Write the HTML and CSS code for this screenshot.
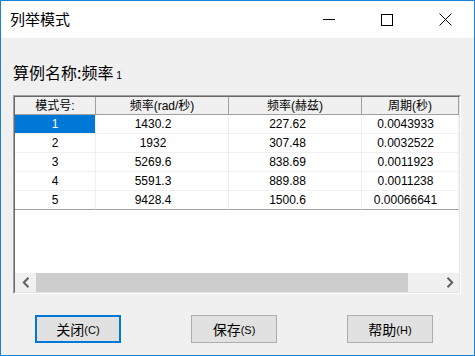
FILE: index.html
```html
<!DOCTYPE html>
<html lang="zh-CN">
<head>
<meta charset="utf-8">
<title>列举模式</title>
<link rel="stylesheet" href="styles.css">
</head>
<body>
<div class="window">
  <div class="titlebar">
    <div class="title">列举模式</div>
    <div class="controls">
      <div class="ctl"><svg width="12" height="12" viewBox="0 0 12 12"><path d="M0 5.5H12" stroke="#000" stroke-width="1"/></svg></div>
      <div class="ctl"><svg width="12" height="12" viewBox="0 0 12 12"><rect x="0.5" y="0.5" width="11" height="11" fill="none" stroke="#000" stroke-width="1"/></svg></div>
      <div class="ctl"><svg width="13" height="13" viewBox="0 0 13 13"><path d="M0.5 0.5L12.5 12.5M12.5 0.5L0.5 12.5" stroke="#000" stroke-width="1"/></svg></div>
    </div>
  </div>
  <div class="content">
    <div class="case-name">算例名称:频率<span class="num"> 1</span></div>
    <div class="listbox">
      <div class="list-inner">
        <div class="grid">
          <div class="hcell">模式号:</div>
          <div class="hcell">频率(rad/秒)</div>
          <div class="hcell">频率(赫兹)</div>
          <div class="hcell">周期(秒)</div>

          <div class="cell c1 sel">1</div>
          <div class="cell c2">1430.2</div>
          <div class="cell c3">227.62</div>
          <div class="cell c4">0.0043933</div>

          <div class="cell c1">2</div>
          <div class="cell c2">1932</div>
          <div class="cell c3">307.48</div>
          <div class="cell c4">0.0032522</div>

          <div class="cell c1">3</div>
          <div class="cell c2">5269.6</div>
          <div class="cell c3">838.69</div>
          <div class="cell c4">0.0011923</div>

          <div class="cell c1">4</div>
          <div class="cell c2">5591.3</div>
          <div class="cell c3">889.88</div>
          <div class="cell c4">0.0011238</div>

          <div class="cell c1 last">5</div>
          <div class="cell c2 last">9428.4</div>
          <div class="cell c3 last">1500.6</div>
          <div class="cell c4 last">0.00066641</div>
        </div>
        <div class="blank"></div>
        <div class="hscroll">
          <div class="arrow left"><svg width="8" height="11" viewBox="0 0 8 11"><path d="M6.5 0.8L1.8 5.5L6.5 10.2" fill="none" stroke="#606060" stroke-width="2"/></svg></div>
          <div class="thumb"></div>
          <div class="track"></div>
          <div class="arrow right"><svg width="8" height="11" viewBox="0 0 8 11"><path d="M1.5 0.8L6.2 5.5L1.5 10.2" fill="none" stroke="#606060" stroke-width="2"/></svg></div>
        </div>
      </div>
    </div>
    <div class="buttons">
      <div class="btn default">关闭<span class="key">(C)</span></div>
      <div class="btn">保存<span class="key">(S)</span></div>
      <div class="btn">帮助<span class="key">(H)</span></div>
    </div>
  </div>
</div>
</body>
</html>
```
FILE: styles.css
```css
* { box-sizing: border-box; }
html, body { margin: 0; padding: 0; background: #f0f0f0; }
body { font-family: "Liberation Sans", "Noto Sans CJK SC", sans-serif; color: #000; }

.window {
  width: 475px;
  height: 356px;
  border: 1px solid #1883d7;
  background: #f0f0f0;
  display: flex;
  flex-direction: column;
  overflow: hidden;
}

.titlebar {
  height: 37px;
  background: #fff;
  display: flex;
  align-items: center;
  flex: none;
}
.title {
  flex: 1;
  padding-left: 9px;
  font-family: "Noto Sans CJK SC", sans-serif;
  font-size: 15px;
  line-height: 20px;
  padding-bottom: 1px;
}
.controls { display: flex; height: 100%; }
.ctl {
  width: 58px;
  height: 100%;
  display: flex;
  align-items: center;
  justify-content: center;
  padding-bottom: 0px;
}
.ctl svg { display: block; }

.content {
  flex: 1;
  padding: 23px 0 0 12px;
  display: flex;
  flex-direction: column;
}

.case-name {
  font-family: "Noto Sans CJK SC", sans-serif;
  font-size: 16px;
  line-height: 22px;
  height: 22px;
  margin-bottom: 12px;
}
.case-name .num {
  font-family: "Liberation Sans", sans-serif;
  font-size: 10.5px;
}

.listbox {
  width: 448px;
  height: 199px;
  border: 1px solid;
  border-color: #a0a0a0 #ffffff #ffffff #a0a0a0;
}
.list-inner {
  height: 100%;
  border: 1px solid;
  border-color: #696969 #e3e3e3 #e3e3e3 #696969;
  background: #fff;
  display: flex;
  flex-direction: column;
}

.grid {
  display: grid;
  grid-template-columns: 81px 133px 133px 97px;
  flex: none;
}
.hcell {
  height: 18px;
  background: #f0f0f0;
  border-right: 1px solid #a0a0a0;
  border-bottom: 1px solid #a0a0a0;
  font-family: "Liberation Sans", "Noto Sans CJK SC", sans-serif;
  font-size: 12px;
  line-height: 17px;
  padding-top: 1px;
  text-align: center;
  white-space: nowrap;
}
.cell {
  height: 19px;
  border-right: 1px solid #f0f0f0;
  border-bottom: 1px solid #f0f0f0;
  font-size: 12px;
  line-height: 18px;
  text-align: center;
  white-space: nowrap;
}
.cell.c2 { padding-right: 18px; }
.cell.c3 { padding-right: 15px; }
.cell.c4 { padding-right: 9px; }
.cell.last { border-bottom-color: #a0a0a0; }
.cell.sel { background: #0078d7; color: #fff; }

.blank { flex: 1; }

.hscroll {
  height: 19px;
  flex: none;
  display: flex;
  background: #f0f0f0;
}
.arrow {
  display: flex;
  align-items: center;
  justify-content: center;
}
.arrow.left { width: 21px; }
.arrow.right { width: 18px; }
.thumb { width: 372px; background: #cdcdcd; }
.track { flex: 1; }

.buttons {
  display: flex;
  gap: 70px;
  padding-left: 22px;
  margin-top: 21px;
}
.btn {
  width: 86px;
  height: 28px;
  background: #e1e1e1;
  border: 1px solid #adadad;
  display: flex;
  align-items: center;
  justify-content: center;
  font-family: "Noto Sans CJK SC", sans-serif;
  font-size: 14px;
  line-height: 18px;
}
.btn.default { border: 2px solid #0078d7; }
.btn .key {
  font-family: "Liberation Sans", sans-serif;
  font-size: 11px;
  padding-top: 2px;
}
```
